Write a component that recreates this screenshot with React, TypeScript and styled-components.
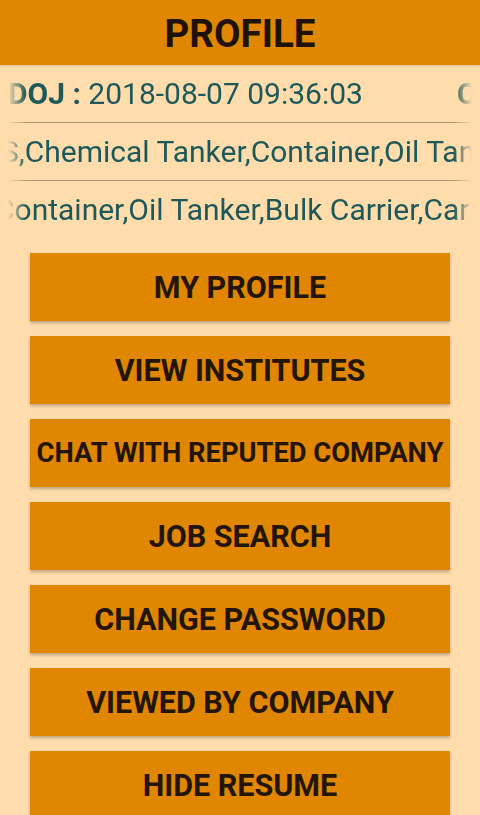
import React from "react";
import styled, { createGlobalStyle } from "styled-components";

const GlobalStyle = createGlobalStyle`
  html, body {
    margin: 0;
    padding: 0;
    background: #fedcac;
  }
  body {
    font-family: Roboto, "Liberation Sans", Arial, sans-serif;
  }
`;

// long labels get shrunk to fit, like the app's autosize text
const menu = [
  { label: "MY PROFILE" },
  { label: "VIEW INSTITUTES" },
  { label: "CHAT WITH REPUTED COMPANY", size: 27.3 },
  { label: "JOB SEARCH" },
  { label: "CHANGE PASSWORD" },
  { label: "VIEWED BY COMPANY" },
  { label: "HIDE RESUME" },
];

const App = () => {
  return (
    <Page>
      <GlobalStyle />
      <Header>PROFILE</Header>

      <InfoRow $divider>
        <Marquee $shift={0}>
          <Label>DOJ :</Label> 2018-08-07 09:36:03
          <Gap />
          <Label>CDC No :</Label>
        </Marquee>
      </InfoRow>

      <InfoRow $divider>
        <Marquee $shift={7}>
          S,Chemical Tanker,Container,Oil Tanker,Bulk Carrier
        </Marquee>
      </InfoRow>

      <InfoRow>
        <Marquee $shift={13}>
          Container,Oil Tanker,Bulk Carrier,Car Carrier
        </Marquee>
      </InfoRow>

      <ButtonList>
        {menu.map((item) => (
          <MenuButton key={item.label} $size={item.size}>
            {item.label}
          </MenuButton>
        ))}
      </ButtonList>
    </Page>
  );
};

const Page = styled.div`
  min-height: 815px;
  background: #fedcac;
  overflow: hidden;
`;

const Header = styled.div`
  height: 65px;
  padding-top: 2px;
  box-sizing: border-box;
  background: #e08600;
  display: flex;
  align-items: center;
  justify-content: center;
  color: #1f1309;
  font-size: 38.5px;
  font-weight: 700;
  box-shadow: 0 1px 2px rgba(0, 0, 0, 0.15);
`;

const InfoRow = styled.div<{ $divider?: boolean }>`
  height: 57px;
  display: flex;
  align-items: center;
  padding: 0 8px;
  overflow: hidden;
  border-bottom: ${(p) => (p.$divider ? "1px solid #b39371" : "none")};
  -webkit-mask-image: linear-gradient(
    to right,
    transparent 8px,
    #000 26px,
    #000 calc(100% - 26px),
    transparent calc(100% - 8px)
  );
  mask-image: linear-gradient(
    to right,
    transparent 8px,
    #000 26px,
    #000 calc(100% - 26px),
    transparent calc(100% - 8px)
  );
`;

const Marquee = styled.div<{ $shift: number }>`
  white-space: nowrap;
  color: #1d595b;
  font-size: 30px;
  margin-left: ${(p) => -p.$shift}px;
`;

const Label = styled.span`
  font-weight: 700;
`;

const Gap = styled.span`
  display: inline-block;
  width: 94px;
`;

const ButtonList = styled.div`
  display: flex;
  flex-direction: column;
  gap: 15px;
  padding: 15px 30px 0;
`;

const MenuButton = styled.button<{ $size?: number }>`
  height: 68px;
  width: 100%;
  border: none;
  border-radius: 0;
  background: #e08600;
  color: #231509;
  font-family: Roboto, "Liberation Sans", Arial, sans-serif;
  font-size: ${(p) => p.$size ?? 30.5}px;
  font-weight: 700;
  white-space: nowrap;
  padding: 0;
  box-shadow: 0 2px 3px rgba(0, 0, 0, 0.25);
  cursor: pointer;
`;

export default App;
